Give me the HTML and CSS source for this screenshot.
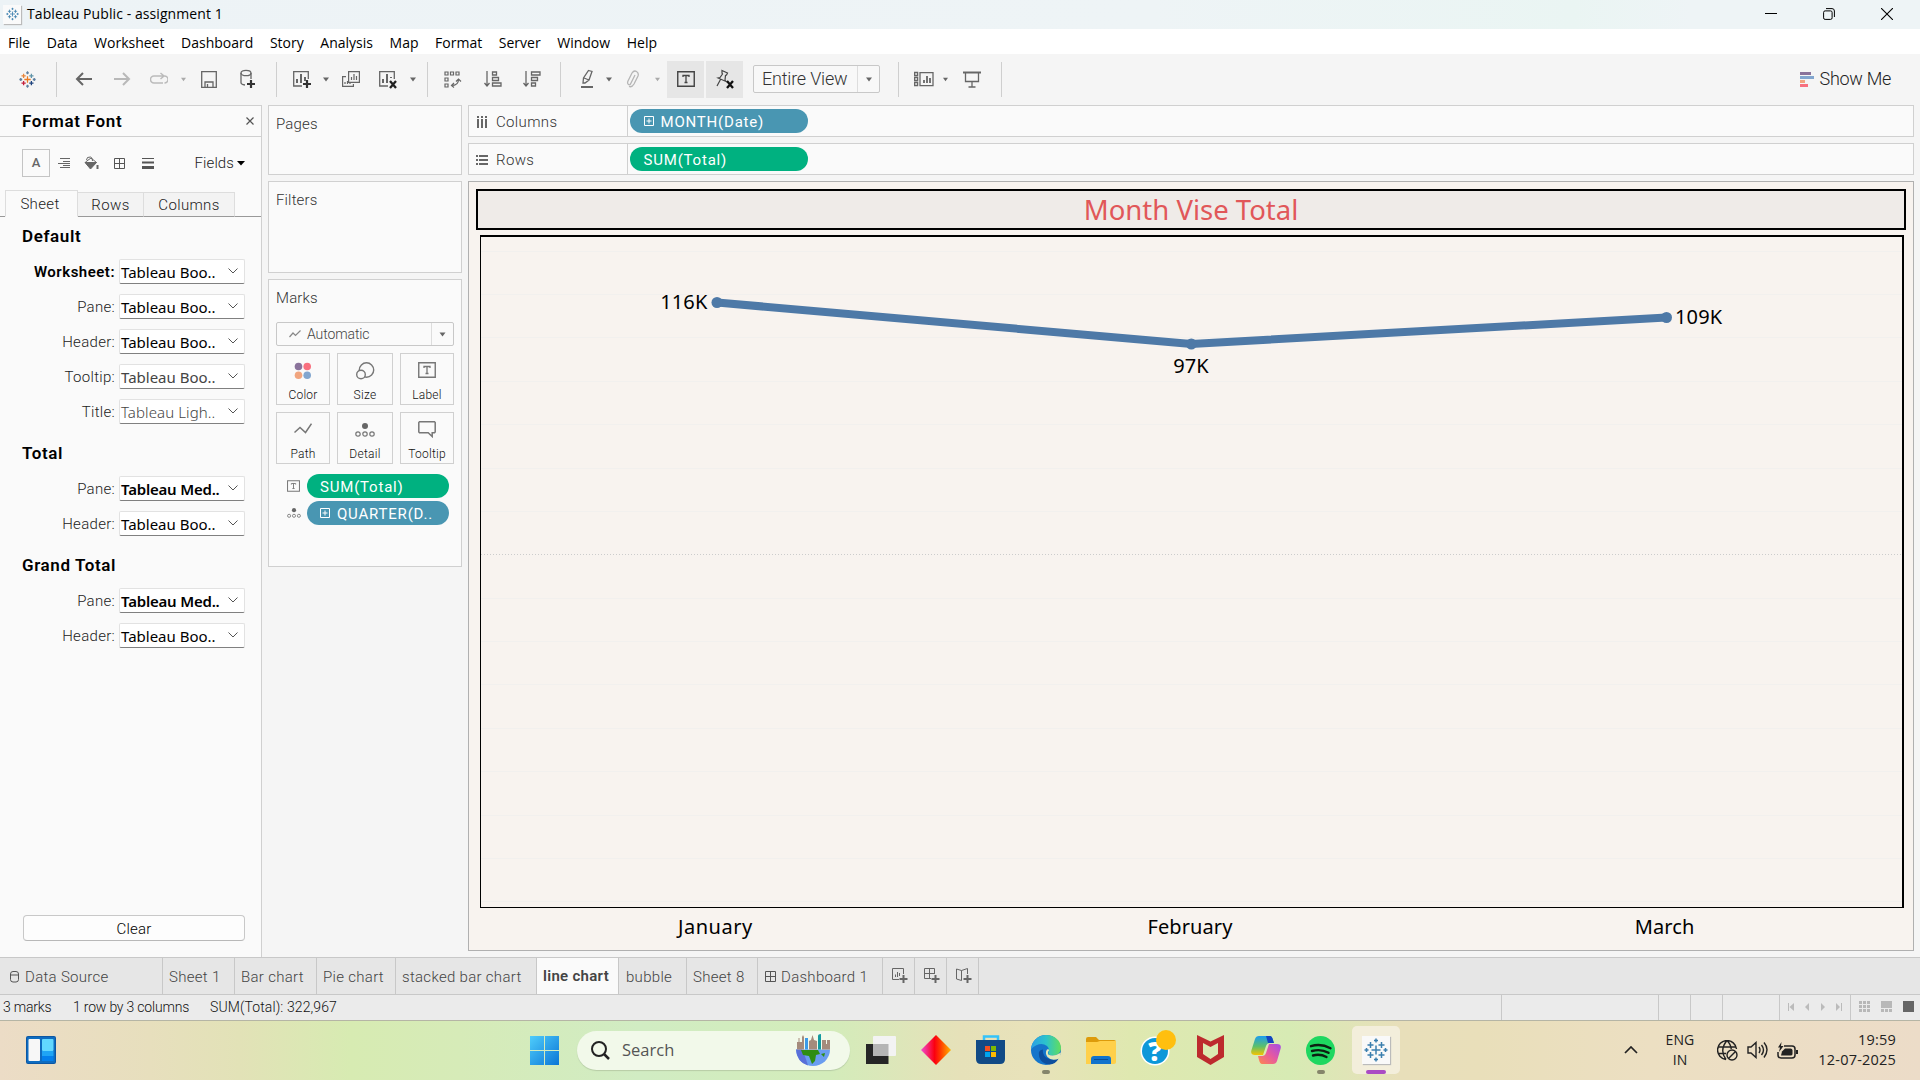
FILE: index.html
```html
<!DOCTYPE html>
<html lang="en">
<head>
<meta charset="utf-8">
<title>Tableau Public - assignment 1</title>
<link rel="stylesheet" href="styles.css">
</head>
<body>
<svg class="defs" width="0" height="0">
  <defs>
    <symbol id="sparkle" viewBox="0 0 24 24">
      <path class="c1" d="M12 7.5v9M7.5 12h9"/>
      <path class="c2" d="M6.5 4v6M3.5 7h6"/><path class="c3" d="M17.5 4v6M14.5 7h6"/>
      <path class="c4" d="M6.5 14v6M3.5 17h6"/><path class="c5" d="M17.500 14v6M14.500 17h6"/>
      <path class="c6" d="M12 .5v4M10 2.500h4M12 19.500v4M10 21.500h4M.5 12h4M2.500 10v4M19.500 12h4M21.500 10v4"/>
    </symbol>
    <symbol id="caret" viewBox="0 0 6 5"><path d="M0 .5h6L3 4.500z"/></symbol>
    <symbol id="chev" viewBox="0 0 10 6"><path d="M.5.5 5 5 9.500.5" fill="none" stroke="#555"/></symbol>
    <symbol id="boxt" viewBox="0 0 18 16"><path d="M.75.75h16.500v14.500H.75z" fill="none" stroke="currentColor" stroke-width="1.400"/><path d="M6 6V4.500h6V6M9 4.500v7M7.500 11.500h3" fill="none" stroke="currentColor" stroke-width="1.300"/></symbol>
    <symbol id="detail" viewBox="0 0 20 14"><circle cx="10" cy="3" r="3" fill="#666"/><g fill="none" stroke="#777" stroke-width="1.200"><circle cx="3" cy="11" r="2.200"/><circle cx="10" cy="11" r="2.200"/><circle cx="17" cy="11" r="2.200"/></g></symbol>
    <symbol id="plusbox" viewBox="0 0 10 10"><path d="M.5.5h9v9h-9zM5 2.500v5M2.500 5h5" fill="none" stroke="#fff"/></symbol>
  </defs>
</svg>

<header class="titlebar">
  <span class="appicon"><svg class="blue-spark" width="13" height="14"><use href="#sparkle"/></svg></span>
  <span class="apptitle">Tableau Public - assignment 1</span>
  <span class="winbtns">
    <svg width="12" height="12"><path d="M0 5.500h12" stroke="#000"/></svg>
    <svg width="12" height="12" fill="none" stroke="#000"><rect x=".6" y="2.900" width="8.500" height="8.500" rx="1.500"/><path d="M3 .6h6a2.400 2.400 0 0 1 2.400 2.400v6" /></svg>
    <svg width="12" height="12"><path d="M0 0l12 12M12 0 0 12" stroke="#000" stroke-width="1.100"/></svg>
  </span>
</header>

<nav class="menu">
  <span>File</span><span>Data</span><span>Worksheet</span><span>Dashboard</span><span>Story</span><span>Analysis</span><span>Map</span><span>Format</span><span>Server</span><span>Window</span><span>Help</span>
</nav>

<div class="toolbar">
  <svg class="color-spark" width="17" height="17"><use href="#sparkle"/></svg>
  <i class="sep"></i>
  <svg width="17" height="14" fill="none" stroke="#666" stroke-width="2"><path d="M17 7H2M8 1 2 7l6 6"/></svg>
  <svg width="17" height="14" fill="none" stroke="#b8b8b8" stroke-width="2"><path d="M0 7h15M9 1l6 6-6 6"/></svg>
  <svg width="18" height="14" fill="none" stroke="#bbb" stroke-width="1.500"><path d="M13 11H4a3.500 3.500 0 0 1 0-7h10.500a3 3 0 0 1 0 7M10.500 1l3.500 3-3.500 3"/></svg>
  <svg class="dim" width="5" height="5"><use href="#caret"/></svg>
  <svg width="16" height="17" fill="none" stroke="#666" stroke-width="1.300"><path d="M.7.700h14.600v15.600H.7zM4 16v-5h8v5M6.500 13v3"/></svg>
  <svg width="16" height="20" fill="none" stroke="#666" stroke-width="1.300"><ellipse cx="6" cy="4" rx="5" ry="2.700"/><path d="M1 4v9.500q0 2 4 2.500M11 4v6"/><path d="M11 11v8M7 15h8" stroke="#333" stroke-width="2.200"/></svg>
  <i class="sep"></i>
  <svg width="20" height="20" fill="none" stroke="#666" stroke-width="1.300"><path d="M10 17H1.700V2.700h14.600V10"/><path d="M5 14v-4M9 14V5M13 12V8" stroke-width="2"/><path d="M15 11v8M11 15h8" stroke="#333" stroke-width="2.200"/></svg>
  <svg width="6" height="5"><use href="#caret"/></svg>
  <svg width="18" height="18" fill="none" stroke="#666" stroke-width="1.200"><path d="M6.600 1.600h10.800v10.800H6.600zM4 6.600H.6v9.800h10.800V14"/><path d="M9.500 10V7M12 10V4M14.500 10V6M3 14v-2M5.500 14v-3M8 14v-1"/></svg>
  <svg width="20" height="20" fill="none" stroke="#666" stroke-width="1.300"><path d="M10 17H1.700V2.700h14.600V10"/><path d="M5 14v-4M9 14V5M13 9V8" stroke-width="2"/><path d="m12 12 6 7M18 12l-6 7" stroke="#222" stroke-width="2.300"/></svg>
  <svg width="6" height="5"><use href="#caret"/></svg>
  <i class="sep"></i>
  <svg width="18" height="18" fill="none" stroke="#666" stroke-width="1.200"><path d="M1 2h3v3H1zM6.500 2h3v3h-3zM12 2h3v3h-3zM1 8h3v3H1zM1 14h3v3H1zM7.500 15.500q7 0 7-6M12 11.500l2.500-2.500 2.500 2.500M10 13l-2.500 2.500 2.500 2"/></svg>
  <svg width="18" height="16" fill="none" stroke="#666" stroke-width="1.300"><path d="M3 0v15M.500 12 3 15l2.500-3M8.500 1h4v3h-4zM8.500 6.500h6v3h-6zM8.500 12h8.500v3H8.500z"/></svg>
  <svg width="18" height="16" fill="none" stroke="#666" stroke-width="1.300"><path d="M3 0v15M.500 12 3 15l2.500-3M8.500 1H17v3H8.500zM8.500 6.500h6v3h-6zM8.500 12h4v3h-4z"/></svg>
  <i class="sep"></i>
  <svg width="14" height="20" fill="none" stroke="#666" stroke-width="1.300"><path d="M8.500 1.500 12 2.500 9 11l-4 3H3l.5-5zM4 9l5 2"/><path d="M1 18h12" stroke-width="2"/></svg>
  <svg width="6" height="5"><use href="#caret"/></svg>
  <svg width="14" height="18" fill="none" stroke="#b5b5b5" stroke-width="1.300"><path d="m9 5-4 8q-1 2.500-2.500 1.500T2 11l4-8q2-3 4.500-1.500T12 6l-4 8q-2 3.500-5 2.500"/></svg>
  <svg class="dim" width="5" height="5"><use href="#caret"/></svg>
  <span class="toggle"><svg width="18" height="16" color="#444"><use href="#boxt"/></svg></span>
  <span class="toggle"><svg width="20" height="20" fill="none" stroke="#444" stroke-width="1.200"><path d="M7 1.500 12.500 4l-1 2-1 .500-.5 4.500 1 1.500-8-3.500 2-.500L7.500 5l-.5-1zM5.500 10.500 2 17"/><path d="m12 12 6 7M18 12l-6 7" stroke="#111" stroke-width="2.300"/></svg></span>
  <span class="viewselect"><span>Entire View</span><b><svg width="8" height="5"><use href="#caret"/></svg></b></span>
  <i class="sep"></i>
  <svg width="20" height="16" fill="none" stroke="#666" stroke-width="1.300"><path d="M6 1.600h13v13H6zM.6 1.500h3v3h-3zM.6 6.500h3v3h-3zM.6 11.500h3v3h-3z"/><path d="M10 12V9M13 12V5M16 12V7" stroke-width="1.800"/></svg>
  <svg width="5" height="5"><use href="#caret"/></svg>
  <svg width="18" height="17" fill="none" stroke="#666" stroke-width="1.300"><path d="M2.500 2v8.500h13V2M9 11v5M5.500 16h7"/><path d="M0 1.500h18" stroke-width="2"/></svg>
  <i class="sep"></i>
  <span class="showme"><svg width="14" height="15"><path d="M0 0h11v3H0z" fill="#8a739b"/><path d="M0 4h14v3H0z" fill="#82a6cf"/><path d="M0 8h5v3H0z" fill="#f1a57f"/><path d="M0 12h8v3H0z" fill="#f8707f"/></svg>Show Me</span>
</div>

<main class="main">
  <aside class="format">
    <div class="fhead"><span>Format Font</span><svg width="8" height="8"><path d="m.5.5 7 7M7.500.5l-7 7" stroke="#555" stroke-width="1.200"/></svg></div>
    <div class="ficons">
      <span class="fa">A</span>
      <svg width="12" height="10" stroke="#666"><path d="M2 .5h10M5 3.500h7M0 5.500h12M5 7.500h7M2 9.500h10"/></svg>
      <svg width="15" height="14" fill="none" stroke="#666"><path d="M1 6.500h11.500L6.500 13z" fill="#666"/><path d="M1.500 6 7 2l5.500 4.500M2.500 4q0-3.500 4-3 2 .5 2 4"/><path d="M13.500 9v4" stroke-width="2"/></svg>
      <svg width="11" height="11" fill="none" stroke="#555"><path d="M.5.5h10v10H.5zM5.500.5v10M.5 5.500h10"/></svg>
      <svg width="12" height="11" stroke="#555"><path d="M0 .5h12"/><path d="M0 4.500h12" stroke-width="2"/><path d="M0 9.500h12" stroke-width="3"/></svg>
      <span class="fields">Fields<svg width="8" height="5"><path d="M0 0h8L4 4.500z"/></svg></span>
    </div>
    <div class="ftabs"><span class="on">Sheet</span><span class="t2">Rows</span><span class="t3">Columns</span></div>
    <section><h3>Default</h3>
      <div class="frow"><label class="strong">Worksheet:</label><span class="combo">Tableau Boo..<svg width="10" height="6"><use href="#chev"/></svg></span></div>
      <div class="frow"><label>Pane:</label><span class="combo">Tableau Boo..<svg width="10" height="6"><use href="#chev"/></svg></span></div>
      <div class="frow"><label>Header:</label><span class="combo">Tableau Boo..<svg width="10" height="6"><use href="#chev"/></svg></span></div>
      <div class="frow"><label>Tooltip:</label><span class="combo soft">Tableau Boo..<svg width="10" height="6"><use href="#chev"/></svg></span></div>
      <div class="frow"><label>Title:</label><span class="combo light">Tableau Ligh..<svg width="10" height="6"><use href="#chev"/></svg></span></div>
    </section>
    <section><h3>Total</h3>
      <div class="frow"><label>Pane:</label><span class="combo bold">Tableau Med..<svg width="10" height="6"><use href="#chev"/></svg></span></div>
      <div class="frow"><label>Header:</label><span class="combo">Tableau Boo..<svg width="10" height="6"><use href="#chev"/></svg></span></div>
    </section>
    <section><h3>Grand Total</h3>
      <div class="frow"><label>Pane:</label><span class="combo bold">Tableau Med..<svg width="10" height="6"><use href="#chev"/></svg></span></div>
      <div class="frow"><label>Header:</label><span class="combo">Tableau Boo..<svg width="10" height="6"><use href="#chev"/></svg></span></div>
    </section>
    <button class="clear">Clear</button>
  </aside>

  <div class="cards">
    <div class="card pages">Pages</div>
    <div class="card filters">Filters</div>
    <div class="card marks">
      <div class="cardtitle">Marks</div>
      <div class="marktype"><svg width="12" height="8"><path d="M.5 7 4 3l2.500 2.500L11.500.5" fill="none" stroke="#888" stroke-width="1.200"/></svg><span>Automatic</span><b><svg width="7" height="5"><use href="#caret"/></svg></b></div>
      <div class="markgrid">
        <span><svg width="18" height="18"><circle cx="4.500" cy="4.500" r="3.800" fill="#8a739b"/><circle cx="13.200" cy="4.500" r="3.800" fill="#f8707f"/><circle cx="4.500" cy="13.200" r="3.800" fill="#f1a57f"/><circle cx="13.200" cy="13.200" r="3.800" fill="#82a6cf"/></svg>Color</span>
        <span><svg width="20" height="18" fill="none" stroke="#777" stroke-width="1.400"><circle cx="11.500" cy="8" r="7.200"/><circle cx="6" cy="12.500" r="4.300" fill="#fafafa"/></svg>Size</span>
        <span><svg width="18" height="16" color="#777"><use href="#boxt"/></svg>Label</span>
        <span class="low"><svg width="18" height="12"><path d="M.5 9.500 6 4.500l5.500 5L17.500.7" fill="none" stroke="#777" stroke-width="1.500"/></svg>Path</span>
        <span class="low"><svg width="20" height="14"><use href="#detail"/></svg>Detail</span>
        <span><svg width="18" height="17"><path d="M1.500.8h15l.7.700v9.500l-.7.700h-2.300v3.800l-4-3.800H1.500l-.7-.7V1.500z" fill="none" stroke="#777" stroke-width="1.500"/></svg>Tooltip</span>
      </div>
      <div class="markpill"><svg width="13" height="12" color="#777"><use href="#boxt"/></svg><span class="pill green">SUM(Total)</span></div>
      <div class="markpill"><svg width="14" height="10"><use href="#detail"/></svg><span class="pill blue"><svg width="10" height="10"><use href="#plusbox"/></svg>QUARTER(D..</span></div>
    </div>
  </div>

  <div class="work">
    <div class="shelf"><span class="shelflabel"><svg width="12" height="12" fill="#666"><path d="M1 0h2v2H1zM5 0h2v2H5zM9 0h2v2H9zM1 3h2v9H1zM5 3h2v9H5zM9 3h2v9H9z"/></svg>Columns</span><span class="pill blue"><svg width="10" height="10"><use href="#plusbox"/></svg>MONTH(Date)</span></div>
    <div class="shelf"><span class="shelflabel"><svg width="12" height="10" fill="#666"><path d="M0 0h2v2H0zM0 4h2v2H0zM0 8h2v2H0zM3 0h9v2H3zM3 4h9v2H3zM3 8h9v2H3z"/></svg>Rows</span><span class="pill green">SUM(Total)</span></div>
    <div class="view">
      <h1>Month Vise Total</h1>
      <div class="plot">
        <svg width="1421" height="670">
          <path class="grid" d="M0 14.500h1421M0 57.500h1421M0 100.500h1421M0 144.500h1421M0 187.500h1421M0 231.500h1421M0 274.500h1421M0 361.500h1421M0 404.500h1421M0 447.500h1421M0 491.500h1421M0 534.500h1421M0 578.500h1421M0 621.500h1421M0 664.500h1421"/>
          <path class="mid" d="M0 317.500h1421"/>
          <polyline points="236,65.500 710.300,107 1185.500,80.500"/>
          <circle cx="236" cy="65.500" r="5.500"/><circle cx="710.300" cy="107" r="5.500"/><circle cx="1185.500" cy="80.500" r="5.500"/>
          <text x="226.500" y="72" text-anchor="end">116K</text>
          <text x="710" y="136" text-anchor="middle">97K</text>
          <text x="1194" y="87">109K</text>
        </svg>
      </div>
      <div class="months"><span>January</span><span>February</span><span>March</span></div>
    </div>
  </div>
</main>

<div class="sheets">
  <span class="w163"><svg width="9" height="12" fill="none" stroke="#555"><rect x=".5" y=".5" width="8" height="10.500" rx="2.500"/><path d="M.5 4h8"/></svg>Data Source</span>
  <span class="w72">Sheet 1</span><span class="w82">Bar chart</span><span class="w79">Pie chart</span><span class="w141">stacked bar chart</span><span class="w82 active">line chart</span><span class="w68">bubble</span><span class="w71">Sheet 8</span>
  <span class="w125"><svg width="12" height="12" fill="none" stroke="#555"><path d="M.5.5h10v10H.5zM5.500.5v10M.5 5.500h10"/></svg>Dashboard 1</span>
  <span class="add"><svg width="16" height="16" fill="none" stroke="#666"><path d="M7 11.500H.5V.5h11V6M3.500 9V6.500M5.500 9V4M7.500 8V5"/><path d="M11.500 7v8M7.500 11h8" stroke-width="2"/></svg></span>
  <span class="add"><svg width="16" height="16" fill="none" stroke="#666"><path d="M7 10.500H.5V.5h10V6M5.500.5v10M.5 5.500h10"/><path d="M11.500 7v8M7.500 11h8" stroke-width="2"/></svg></span>
  <span class="add"><svg width="16" height="16" fill="none" stroke="#666"><path d="M5.500 12.500.5 11V1l5 1.500 6-2V6M5.500 2.500v10"/><path d="M11.500 7v8M7.500 11h8" stroke-width="2"/></svg></span>
</div>
<footer class="status">
  <span class="s1">3 marks</span><span class="s2">1 row by 3 columns</span><span class="s3">SUM(Total): 322,967</span>
  <div class="cells">
    <i class="c157"></i><i class="c32"></i><i class="c32"></i><i class="c57"></i>
    <i class="navs"><svg width="54" height="8" fill="#bbb"><path d="M0 0h1v8H0zM6 0v8L1.500 4zM21 0v8l-4-4zM33 0v8l4-4zM48 0v8l4-4zM53 0h1v8h-1z"/></svg></i>
    <i class="views">
      <svg width="11" height="11" fill="#b8b8b8"><path d="M0 0h3v3H0zM4 0h3v3H4zM8 0h3v3H8zM0 4h3v3H0zM4 4h3v3H4zM8 4h3v3H8zM0 8h3v3H0zM4 8h3v3H4zM8 8h3v3H8z"/></svg>
      <svg width="11" height="11" fill="#b8b8b8"><path d="M0 0h11v7H0zM0 8h3v3H0zM4 8h3v3H4zM8 8h3v3H8z"/></svg>
      <svg width="11" height="11"><path d="M0 0h11v11H0z" fill="#666"/></svg>
    </i>
  </div>
</footer>

<div class="taskbar">
  <svg class="widgets" width="30" height="28"><rect width="30" height="28" rx="2" fill="#0b57a4"/><rect x="1" y="1" width="28" height="26" rx="1" fill="#0e6cc0"/><rect x="2.500" y="3" width="11.500" height="22" rx="1" fill="#f7f7f7"/><rect x="16" y="3" width="11.500" height="12" rx="1" fill="#62d8ff"/><rect x="16" y="15" width="11.500" height="5" fill="#1fa5f5"/><rect x="16" y="20" width="11.500" height="5" fill="#0480ec"/></svg>
  <svg class="start" width="29" height="29"><defs><linearGradient id="w" x1="0" y1="0" x2="1" y2="1" gradientUnits="objectBoundingBox"><stop offset="0" stop-color="#4fcdfb"/><stop offset="1" stop-color="#0a76d6"/></linearGradient></defs><path d="M0 0h14v14H0zM15 0h14v14H15zM0 15h14v14H0zM15 15h14v14H15z" fill="url(#w)"/></svg>
  <div class="search">
    <svg width="19" height="19" fill="none" stroke="#222" stroke-width="2"><circle cx="8" cy="8" r="7"/><path d="m13 13 5 5" stroke-width="2.500"/></svg>
    <span>Search</span>
    <svg width="36" height="32"><path d="M1 15.500a17 16.500 0 0 0 34 0z" fill="#6a9df0"/><path d="M1 15.500q1 13 12 16-3-10-6-16z" fill="#5a6fd8"/><path d="M6 16h17l2 4-4 1-1 6-3 3-3-8-6-1zM26 20l4-1-1 4z" fill="#2f8d12"/><path d="M2 15.500V8h1.500V4h1v4H7V3l1-2 1 2v12.500zM14 15.500V7l2-1 1.500-5L19 6l3 1v8.500zM27 15.500V6h4v4h1V6h3v9.500z" fill="#a58b7c"/><path d="M10 15.500V4h3v11.500z" fill="#3c9be8"/><path d="M23 15.500V2q0-2 3-2v15.500z" fill="#149aa0"/></svg>
  </div>
  <div class="apps">
    <span><svg width="30" height="28"><path d="M0 8h22.500v20H0z" fill="#262626"/><rect x="7" y="0" width="23" height="20" rx="1" fill="#f3f3f3"/><path d="M7 8h15.500v12H7z" fill="#b5b5b5"/></svg></span>
    <span><svg width="30" height="30"><defs><linearGradient id="d"><stop offset="0" stop-color="#f04bd4"/><stop offset=".45" stop-color="#fb0010"/><stop offset=".65" stop-color="#ff3a00"/><stop offset="1" stop-color="#ffb400"/></linearGradient></defs><path d="M15 0 30 15 15 30 0 15z" fill="url(#d)"/></svg></span>
    <span><svg width="30" height="30"><path d="M8 6V1.500h14V6" fill="none" stroke="#35c3fa" stroke-width="2.500"/><path d="M0 5h29v19q0 5-5 5H5q-5 0-5-5z" fill="#114a86"/><path d="M9 11h5v5H9z" fill="#f25022"/><path d="M15 11h5v5h-5z" fill="#7fba00"/><path d="M9 17h5v5H9z" fill="#00a4ef"/><path d="M15 17h5v5h-5z" fill="#ffb900"/></svg></span>
    <span class="run"><svg width="30" height="30"><defs><linearGradient id="e"><stop offset="0" stop-color="#2a9fe6"/><stop offset=".5" stop-color="#2cc3cc"/><stop offset="1" stop-color="#62de5c"/></linearGradient></defs><circle cx="15" cy="15" r="15" fill="#1575cb"/><path d="M0 14C1 5 8 0 15 0c9 0 15 6 15 13 0 5-4 7.500-8 7.500-3 0-5-1-4.500-3Q19 14 16 11 9 6 0 14z" fill="url(#e)"/><path d="M8 17q-1 8 6 11.500Q23 32 28 23q-6 3-11 .500-6-3-5-9-3 0-4 2.500z" fill="#0e4f9e"/><path d="M17 17q-1 3.500 4.500 3.500 4 0 8.500-3l-1.500 6q-8 3-12-1.500-3-4-.5-7.500 2-1 2 1z" fill="#e5e8b8"/></svg></span>
    <span><svg width="30" height="27"><path d="M0 2q0-2 2-2h8l3 3h15q2 0 2 2v4H0z" fill="#dd9b0b"/><path d="M0 5h11l3-1h16v21q0 2-2 2H0z" fill="#ffd04a"/><path d="M5 27v-5q0-3 3-3h14q3 0 3 3v5z" fill="#1173cc"/><path d="M8 22.500h14" stroke="#0a4d96"/></svg></span>
    <span><svg width="38" height="38" class="help"><circle cx="18" cy="22" r="14.500" fill="#fff"/><circle cx="18" cy="22" r="13" fill="#0d98d9"/><text x="18" y="32">?</text><circle cx="29" cy="11" r="10" fill="#ffbf0f"/></svg></span>
    <span><svg width="27" height="30"><path d="M0 0v22l13.500 8L27 22V0L13.500 6.500zM6 8l7.500 4L21 8v11l-7.500 5L6 19z" fill="#bd2a2e"/></svg></span>
    <span><svg width="30" height="28"><defs><linearGradient id="p" x1="0" y1="0" x2="0" y2="1"><stop offset="0" stop-color="#1b9df0"/><stop offset=".55" stop-color="#5dc06a"/><stop offset="1" stop-color="#f5c400"/></linearGradient><linearGradient id="q" x1="1" y1="0" x2="0" y2="1"><stop offset="0" stop-color="#a44ee6"/><stop offset=".5" stop-color="#e65aa0"/><stop offset="1" stop-color="#ff8a4a"/></linearGradient></defs><path d="M8 0h11q2 0 3 4l1 3h-4q-3 0-4 3l-3 9H4q-5 0-3.500-5L4 3q1-3 4-3z" fill="url(#p)"/><path d="M15 0h4q2 0 3 4l1 3h-6z" fill="#1544c0"/><path d="M22 28H11q-2 0-3-4l-1-4h4q3 0 4-3l3-9h8q5 0 3.500 5L26 25q-1 3-4 3z" fill="url(#q)"/></svg></span>
    <span class="run"><svg width="29" height="29"><circle cx="14.500" cy="14.500" r="14.500" fill="#1ed760"/><path d="M5 10.200q10-3 19.500 2M6 15q9-2.500 16.500 1.800M7 19.500q7-2 13.500 1.500" fill="none" stroke="#0d1f12" stroke-width="2.400" stroke-linecap="round"/></svg></span>
    <span class="run current"><b class="tile"><svg class="blue-spark" width="24" height="24"><use href="#sparkle"/></svg></b></span>
  </div>
  <div class="tray">
    <svg class="up" width="14" height="8"><path d="M1 7l6-6 6 6" fill="none" stroke="#222" stroke-width="1.700"/></svg>
    <span class="lang">ENG<br>IN</span>
    <svg class="net" width="21" height="21" fill="none" stroke="#222" stroke-width="1.400"><path d="M19.500 9A9.500 9.500 0 1 0 9 19.500M1.500 7h17M1.500 13.500H9M10 .5Q2 10 9 19.500M10 .5q4 4 4.200 8.500"/><circle cx="15" cy="15" r="5"/><path d="m11.500 18.500 7-7"/></svg>
    <svg width="21" height="18" fill="none" stroke="#222" stroke-width="1.400"><path d="M1 6h3l5-4.500v15L4 12H1zM12 6q2 3 0 6M14.500 4q4 5 0 10M17 1.500q6 7 0 15"/></svg>
    <svg width="21" height="17" fill="none" stroke="#222" stroke-width="1.500"><path d="M7 4h8q3 0 3 3v6q0 3-3 3H4q-3 0-3-3v-3"/><path d="M8 6.500h5.500q2 0 2 2V12q0 1.500-2 1.500H4l1-4z" fill="#222" stroke="none"/><path d="M4.500 0 1 5.500h2L2 10l4.500-6H4z" fill="#222" stroke="none"/><path d="M20 8v4" stroke-width="2"/></svg>
    <span class="clock">19:59<br>12-07-2025</span>
  </div>
</div>
</body>
</html>
```
FILE: styles.css
```css
* { box-sizing: border-box; }
html, body { margin: 0; height: 100%; overflow: hidden; }
body { display: flex; flex-direction: column; width: 1920px; height: 1080px; background: #f5f5f5; font: 350 15px/20px Roboto, "Liberation Sans", sans-serif; color: #000; }
svg { display: block; flex: none; }
.defs { position: absolute; }
i, b { font-style: normal; font-weight: inherit; }

.blue-spark { stroke: #3b7fae; stroke-width: 1.5; fill: none; }
.color-spark { fill: none; stroke-width: 1.8; }
.c1 { stroke: var(--m, inherit); }
.color-spark { stroke: #5c7f9f; --m: #eb7a22; --a: #e8853a; --b: #5f93a8; --c: #c4203c; --d: #1f447e; }
.c2 { stroke: var(--a, inherit); } .c3 { stroke: var(--b, inherit); } .c4 { stroke: var(--c, inherit); } .c5 { stroke: var(--d, inherit); }

.titlebar { display: flex; align-items: center; height: 29px; padding: 0 0 1px 3px; background: linear-gradient(90deg, #edf3f6, #eef4f6 60%, #eaf5f3 82%, #eef4f6 88%); font: 14px/20px "Open Sans", sans-serif; }
.appicon { display: grid; place-items: center; width: 18px; height: 19px; background: #fafafa; box-shadow: 1px 1px 1px #bbb; margin-right: 6px; }
.apptitle { letter-spacing: .08px; }
.winbtns { display: flex; gap: 46px; margin-left: auto; padding-right: 27px; }

.menu { display: flex; gap: 16.6px; height: 25px; padding-left: 8px; background: #fff; font: 14px/27px "Open Sans", sans-serif; }

.toolbar { display: grid; grid-template-columns: 47px 10px 44px 34px 40px 9px 42px 36px 21px 29px 19px 31px 44px 6px 22px 30px 50px 28px 29px 24px 19px 30px 18px 39px 39px 145px 18px 34px 9px 44px 15px 1fr; height: 51px; padding: 0 29px 1px 4px; align-items: center; justify-items: center; }
.toolbar use { fill: #666; }
.toolbar use[href="#boxt"], .toolbar use[href="#sparkle"] { fill: none; }
.dim use { fill: #aaa; }
.sep { width: 1px; height: 35px; background: #cfcfcf; }
.toggle { display: grid; place-items: center; width: 37px; height: 37px; background: #e6e6e6; }
.viewselect { display: flex; align-items: center; width: 127px; height: 28px; border: 1px solid #c8c8c8; border-radius: 2px; background: #f8f8f8; font-size: 18px; letter-spacing: -.2px; color: #333; padding-left: 8px; }
.viewselect b { display: grid; place-items: center; margin-left: auto; width: 22px; height: 26px; border-left: 1px solid #ddd; }
.showme { display: flex; align-items: center; gap: 6px; justify-self: end; font-size: 18px; letter-spacing: -.3px; color: #222; }

.main { display: flex; flex: none; height: 852px; }
.format { display: flex; flex-direction: column; width: 262px; background: #fafafa; border: solid #d0d0d0; border-width: 1px 1px 0 0; }
.fhead { display: flex; align-items: center; justify-content: space-between; height: 31px; padding: 0 7px 1px 22px; border-bottom: 1px solid #d0d0d0; font-size: 17px; font-weight: 600; letter-spacing: .7px; }
.ficons { display: flex; align-items: center; height: 28px; margin: 12px 16px 13px 22px; }
.fa { display: grid; place-items: center; width: 28px; height: 28px; border: 1px solid #c4c4c4; font-size: 13px; font-weight: 500; color: #666; margin-right: 8px; }
.ficons svg:nth-of-type(1) { margin-right: 14px; }
.ficons svg:nth-of-type(2) { margin-right: 15px; }
.ficons svg:nth-of-type(3) { margin-right: 17px; }
.fields { display: flex; align-items: center; gap: 3px; margin-left: auto; color: #222; letter-spacing: .1px; }
.fields svg:nth-of-type(1) { margin-right: 0; }
.ftabs { display: flex; align-items: flex-end; height: 27px; padding-left: 5px; background: linear-gradient(#999, #999) bottom/100% 1px no-repeat; color: #222; letter-spacing: .35px; }
.ftabs span { height: 25px; border: 1px solid #ddd; border-bottom-color: #999; border-left: 0; background: #f3f3f3; text-align: center; line-height: 25px; }
.ftabs .on { width: 73px; height: 27px; border-left: 1px solid #ddd; background: #fafafa; border-bottom-color: #fafafa; padding-right: 3px; line-height: 27px; }
.t2 { width: 66px; } .t3 { width: 91px; }
section { padding-top: 8px; margin-bottom: 10px; }
h3 { margin: -1px 0 11px 22px; font-size: 17px; font-weight: 600; line-height: 24px; letter-spacing: .6px; }
.frow { display: flex; margin-bottom: 10px; height: 25px; }
.frow:last-child { margin-bottom: 0; }
label { width: 119px; padding-right: 4px; text-align: right; line-height: 27px; color: #222; letter-spacing: .3px; }
.strong { font-weight: 600; color: #000; letter-spacing: .5px; }
.combo { display: flex; align-items: center; justify-content: space-between; width: 126px; padding: 1px 6px 0 1px; background: #fff; border: 1px solid #e2e2e2; border-bottom-color: #808080; border-radius: 2px; font: 15px/20px "Noto Sans", sans-serif; }
.combo svg { margin-top: -2px; }
.soft { color: #444; } .light { color: #444; font-weight: 300; letter-spacing: .1px; }
.bold { font-weight: 600; letter-spacing: -.2px; }
.clear { width: 222px; height: 26px; margin: auto 0 16px 23px; border: 1px solid #c8c8c8; border-bottom-color: #b8b8b8; border-radius: 4px; background: #fdfdfd; font: inherit; font-size: 15px; line-height: 22px; padding: 1px 0 0; letter-spacing: .2px; }

.cards { display: flex; flex-direction: column; gap: 6px; width: 194px; margin-left: 6px; color: #333; }
.card { border: 1px solid #d0d0d0; background: #fafafa; padding: 8px 7px; letter-spacing: .15px; }
.pages { height: 70px; } .filters { height: 92px; } .marks { height: 288px; }
.marktype { display: flex; align-items: center; height: 24px; margin-top: 14px; padding-left: 12px; border: 1px solid #c8c8c8; border-radius: 2px; font-size: 14px; letter-spacing: -.1px; color: #444; }
.marktype span { margin-left: 6px; }
.marktype b { display: grid; place-items: center; width: 22px; height: 22px; margin-left: auto; border-left: 1px solid #ddd; }
.marktype use { fill: #666; }
.markgrid { display: grid; grid-template-columns: 54px 56px 54px; gap: 7px; margin-top: 7px; margin-bottom: 10px; }
.markgrid span { display: flex; flex-direction: column; align-items: center; justify-content: space-between; height: 52px; border: 1px solid #d0d0d0; padding: 8px 0 1px; font-size: 12px; line-height: 15px; color: #111; letter-spacing: .25px; white-space: nowrap; }
.markgrid .low { padding-top: 10px; }
.markpill { display: flex; align-items: center; justify-content: space-between; height: 24px; margin: 0 5px 3px 11px; }
.pill { display: flex; align-items: center; width: 178px; height: 24px; padding: 1px 0 0 13.5px; border-radius: 12px; color: #fff; letter-spacing: .8px; font-weight: 420; }
.pill svg { margin: 0 7px 1px 0; }
.markpill .pill { width: 142px; padding-left: 13px; }
.green { background: #00b180; } .blue { background: #4996b2; }

.work { display: flex; flex-direction: column; gap: 6px; width: 1446px; margin-left: 6px; }
.shelf { display: flex; align-items: center; height: 32px; border: 1px solid #d0d0d0; background: #fafafa; }
.shelflabel { display: flex; align-items: center; gap: 8px; width: 159px; height: 100%; margin-right: 2px; padding: 1px 0 0 7px; border-right: 1px solid #d0d0d0; color: #333; letter-spacing: .35px; }
.view { display: flex; flex-direction: column; height: 770px; padding: 7px; border: 1px solid #b0b0b0; background: #f8f3ef; font-family: "Noto Sans", sans-serif; font-weight: 400; }
h1 { height: 41px; margin: 0 0 5px; border: 2px solid #000; background: #efebe8; color: #e15759; font-size: 27.5px; font-weight: 400; line-height: 38px; text-align: center; }
.plot { width: 1424px; height: 673px; margin-left: 4px; border: solid #000; border-width: 2px 2px 1px 1px; }
.grid { stroke: #f2f0ee; } .mid { stroke: #ccc; stroke-dasharray: 1 2; }
polyline { fill: none; stroke: #4e79a7; stroke-width: 8; }
.plot circle { fill: #4e79a7; }
.plot text { font-size: 20px; letter-spacing: .15px; }
.months { display: grid; grid-template-columns: repeat(3, 1fr); width: 1424px; margin-left: 2px; padding-top: 5px; text-align: center; font-size: 20px; line-height: 27px; letter-spacing: .1px; }
.months span:first-child { letter-spacing: .5px; }

.sheets { display: flex; height: 37px; background: #e6e6e6; border-top: 1px solid #c8c8c8; color: #444; letter-spacing: .3px; }
.sheets span { display: flex; align-items: center; padding: 1px 0 0 7px; border-right: 1px solid #c8c8c8; white-space: nowrap; }
.sheets .w163 { width: 163px; padding-left: 10px; gap: 6px; }
.w72 { width: 72px; } .w82 { width: 82px; } .w79 { width: 79px; } .w141 { width: 141px; } .w68 { width: 68px; } .w71 { width: 71px; }
.w125 { width: 125px; gap: 4px; }
.sheets .w72, .sheets .w79, .sheets .w141, .sheets .w71, .sheets .w82 { padding-left: 6px; }
.sheets .add { width: 32px; padding: 0 0 0 8.5px; }
.sheets .active { background: #fafafa; font-weight: 600; padding-top: 0; letter-spacing: .3px; }
.status { display: flex; height: 27px; border-top: 1px solid #c8c8c8; border-bottom: 1px solid #b5b5a5; background: #ebebeb; font-size: 14px; line-height: 25px; letter-spacing: -.2px; color: #111; padding-left: 3px; }
.s1 { width: 70px; } .s2 { width: 137px; }
.s3 { letter-spacing: .1px; }
.cells { display: flex; margin-left: auto; }
.cells i { border-left: 1px solid #c8c8c8; height: 25px; }
.c157 { width: 157px; } .c32 { width: 32px; } .c57 { width: 57px; }
.navs { width: 71px; padding: 8px 0 0 8px; }
.views { display: flex; gap: 11px; width: 70px; padding: 6px 0 0 8px; }

.taskbar { display: flex; align-items: center; height: 59px; padding: 0 24px 1px 26px; background: linear-gradient(90deg, #ecdcc6 0, #e7dfbd 150px, #e2e2b7 240px, #d7ebb2 350px, #d6ebb8 460px, #d1ecc3 640px, #d3ecba 830px, #e6e1b9 960px, #e8e2ba 1030px, #dfe8b0 1130px, #d7ebb4 1290px, #e8dfba 1400px, #e9dfba 1480px, #ecdfc2 1650px, #ecdcc8 1920px); font-family: "Open Sans", sans-serif; font-weight: 400; }
.start { margin-left: 474px; }
.search { display: flex; align-items: center; width: 273px; height: 39px; margin-left: 18px; padding: 0 19px 0 14px; border-radius: 20px; background: #f2f9ea; box-shadow: 0 1px 1px #b7cda6; font-size: 16.500px; color: #555; }
.search span { margin: 0 auto 0 12px; }
.apps { display: flex; gap: 7px; margin-left: 6.5px; }
.apps > span { position: relative; display: grid; place-items: center; width: 48px; height: 48px; }
.run::after { content: ""; position: absolute; bottom: 0; left: 20px; width: 8px; height: 4px; border-radius: 2px; background: #85856b; }
.current { background: #f3eedb; border-radius: 5px; }
.current::after { left: 14px; width: 20px; background: #aa4bc4; }
.tile { display: grid; place-items: center; width: 28px; height: 28px; background: #f9f9f9; box-shadow: 1px 1px 1px #bbb; }
.help { overflow: visible; margin-top: -4px; }
.help text { font: 800 27px "Open Sans", sans-serif; fill: #fff; text-anchor: middle; }
.tray { display: flex; align-items: center; margin-left: auto; font-size: 14px; color: #222; letter-spacing: .1px; }
.lang { width: 32px; margin: 0 21px 0 26px; text-align: center; }
.tray .net { margin-right: 9px; } .tray .net + svg { margin-right: 9px; }
.clock { width: 98px; text-align: right; font-size: 14.500px; letter-spacing: .2px; }
```
